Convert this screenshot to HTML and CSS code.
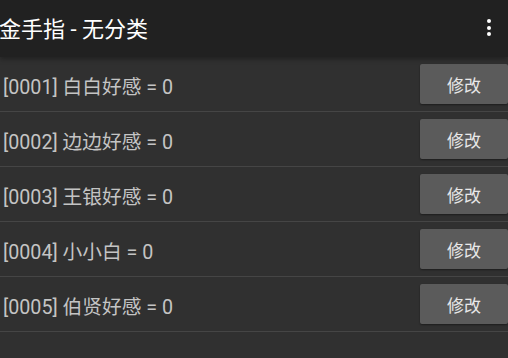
FILE: index.html
```html
<!DOCTYPE html>
<html lang="zh">
<head>
  <meta charset="UTF-8" />
  <title>金手指</title>
  <link rel="stylesheet" href="styles.css">
</head>
<body>

  <!-- AppBar -->
  <div class="appbar">
    <div class="title">金手指 - 无分类</div>
    <div class="menu">
      <span class="dot"></span>
      <span class="dot"></span>
      <span class="dot"></span>
    </div>
  </div>

  <div class="list">
    <div class="row">
      <div class="label">[0001] 白白好感 = 0</div>
      <div class="button">修改</div>
    </div>
    <div class="row">
      <div class="label">[0002] 边边好感 = 0</div>
      <div class="button">修改</div>
    </div>
    <div class="row">
      <div class="label">[0003] 王银好感 = 0</div>
      <div class="button">修改</div>
    </div>
    <div class="row">
      <div class="label">[0004] 小小白 = 0</div>
      <div class="button">修改</div>
    </div>
    <div class="row">
      <div class="label">[0005] 伯贤好感 = 0</div>
      <div class="button">修改</div>
    </div>
  </div>

</body>
</html>
```

FILE: styles.css
```css
body {
  font-family: Roboto, "Noto Sans CJK SC", sans-serif;
  background-color: #303030;
  margin: 0;
  padding: 0;
  overflow: hidden;
}

/* AppBar */
.appbar {
  height: 57px;
  background-color: #212121;
  display: flex;
  align-items: center;
  justify-content: space-between;
  box-shadow: 0 2px 5px rgba(0, 0, 0, 0.35);
  position: relative;
}

.title {
  font-size: 22px;
  color: #fff;
  margin-left: -1px;
  margin-top: -4px;
}

.menu {
  display: flex;
  flex-direction: column;
  gap: 2.5px;
  margin-right: 17px;
  margin-top: -2px;
}

.dot {
  width: 4px;
  height: 4px;
  border-radius: 50%;
  background-color: #fff;
}

.row {
  height: 54px;
  display: flex;
  align-items: center;
  justify-content: space-between;
  border-bottom: 1px solid #454545;
}

.label {
  font-size: 19.7px;
  color: #c4c4c4;
  margin-left: 3px;
  margin-top: 3px;
}

.button {
  width: 88px;
  height: 40px;
  background-color: #5b5b5b;
  border-radius: 2px;
  color: #e8e8e8;
  font-size: 17px;
  display: flex;
  align-items: center;
  justify-content: center;
  box-shadow: 0 1px 2px rgba(0, 0, 0, 0.4);
}
```
